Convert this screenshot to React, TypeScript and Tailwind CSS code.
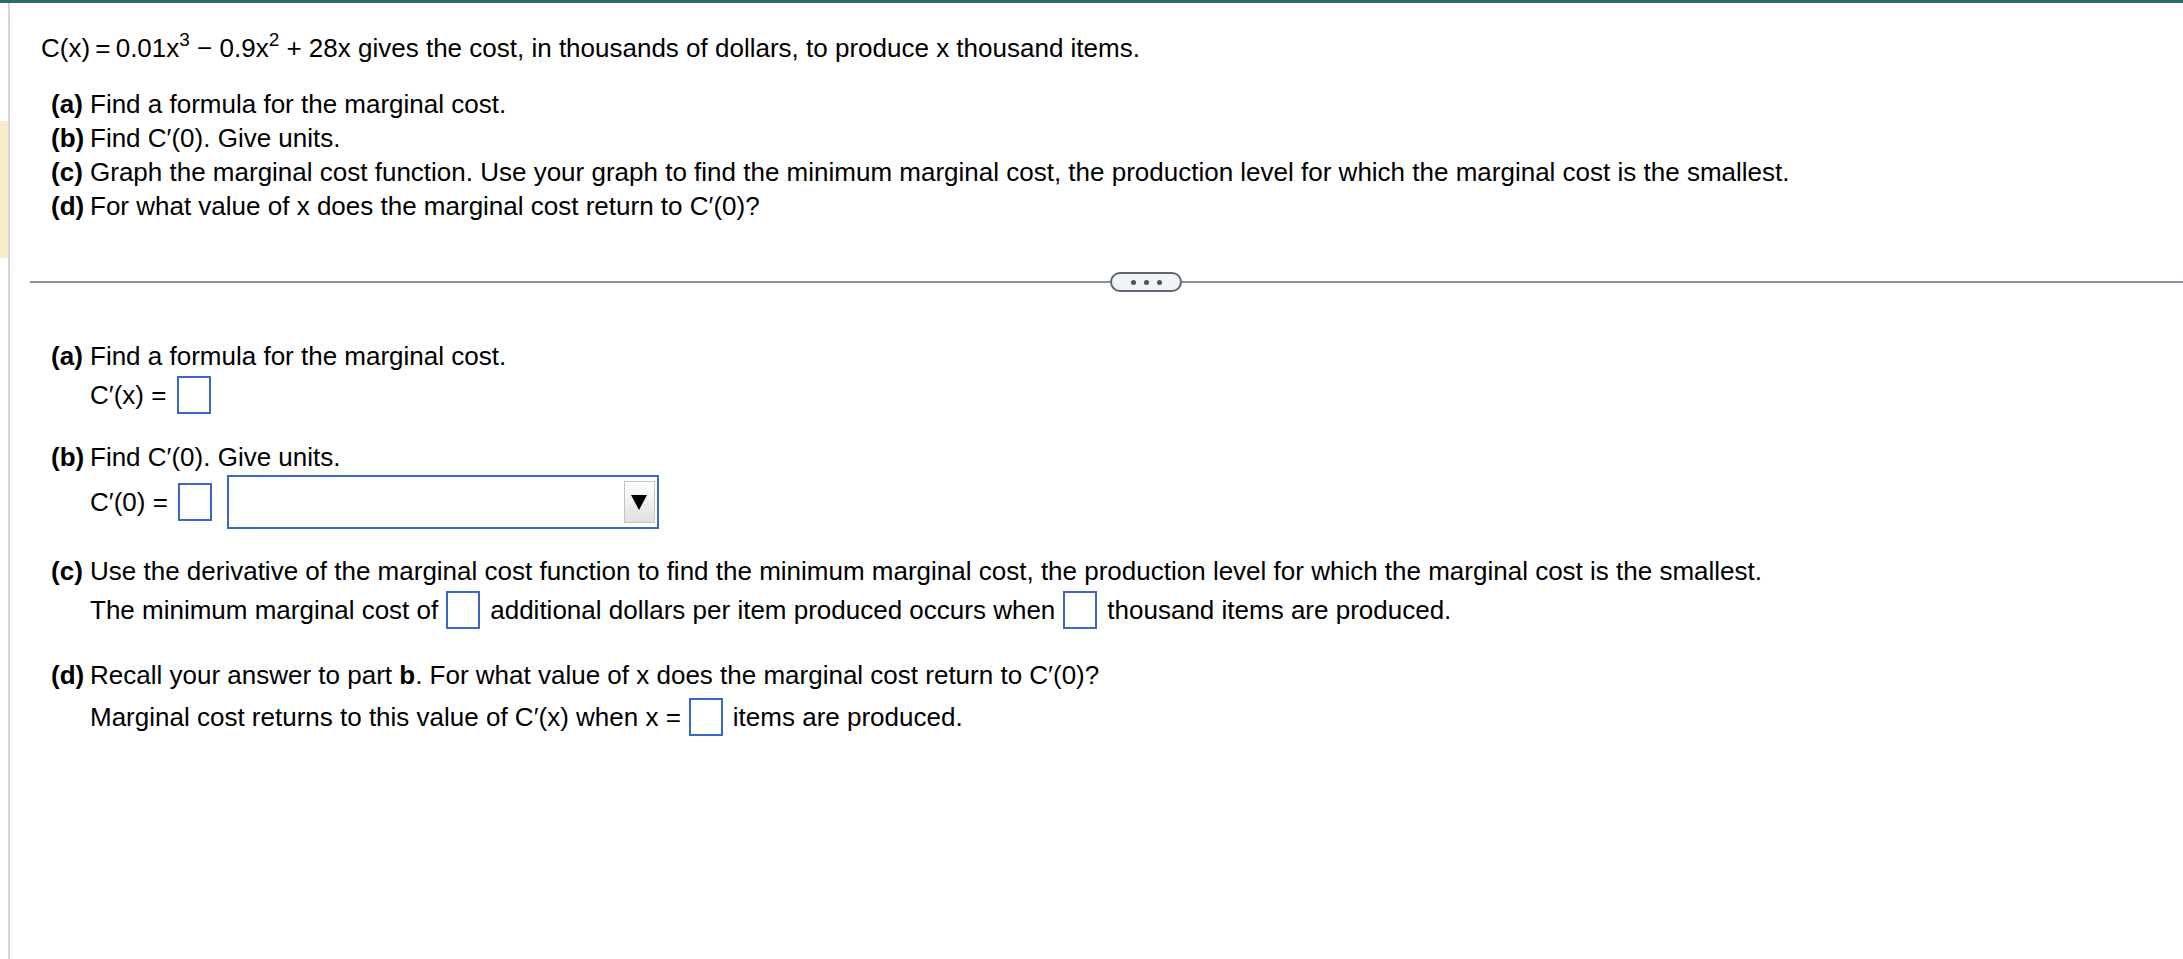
import type { ReactNode } from "react";

const Box = () => (
  <span className="inline-block w-[34px] h-[38px] border-2 border-[#3b67c6] bg-white shrink-0" />
);

const Label = ({ tag, children }: { tag: string; children: ReactNode }) => (
  <div className="flex">
    <span className="w-[39px] shrink-0 font-bold">({tag})</span>
    <span>{children}</span>
  </div>
);

const Sup = ({ n }: { n: string }) => (
  <sup className="text-[19px] relative -top-[11px]">{n}</sup>
);

export default function App() {
  return (
    <div
      className="min-h-screen bg-white border-t-[3px] border-[#2f6670] flex text-[26px] text-black"
      style={{ fontFamily: '"Liberation Sans", Arial, Helvetica, sans-serif' }}
    >
      {/* left gutter */}
      <div className="w-[8px] shrink-0 flex flex-col">
        <div className="mt-[118px] h-[137px] bg-[#f8edcb]" />
      </div>
      <div className="w-[2px] shrink-0 bg-[#d0d4de]" />

      <div className="flex-1 min-w-0">
        {/* question prompt */}
        <div className="pl-[31px] pt-[29px]">
          <p className="leading-[33px]">
            C(x)&thinsp;=&thinsp;0.01x<Sup n="3" /> − 0.9x<Sup n="2" /> + 28x gives the cost, in thousands of dollars, to
            produce x thousand items.
          </p>
          <div className="mt-[22px] pl-[10px] leading-[34px]">
            <Label tag="a">Find a formula for the marginal cost.</Label>
            <Label tag="b">Find C′(0). Give units.</Label>
            <Label tag="c">
              Graph the marginal cost function. Use your graph to find the minimum marginal cost, the production
              level for which the marginal cost is the smallest.
            </Label>
            <Label tag="d">For what value of x does the marginal cost return to C′(0)?</Label>
          </div>
        </div>

        {/* divider */}
        <div className="mt-[49px] ml-[20px] flex items-center h-[20px]">
          <div className="w-[1080px] h-[2px] bg-[#8a92a2]" />
          <div className="w-[72px] h-[20px] shrink-0 rounded-full border-2 border-[#5c6675] bg-[#f2f3f5] flex items-center justify-center gap-[8px]">
            <span className="w-[5px] h-[5px] rounded-full bg-[#4a5260]" />
            <span className="w-[5px] h-[5px] rounded-full bg-[#4a5260]" />
            <span className="w-[5px] h-[5px] rounded-full bg-[#4a5260]" />
          </div>
          <div className="flex-1 h-[2px] bg-[#8a92a2]" />
        </div>

        {/* answers */}
        <div className="pl-[41px] mt-[48px] leading-[33px]">
          <Label tag="a">Find a formula for the marginal cost.</Label>
          <div className="mt-[2px] pl-[39px] h-[40px] flex items-center">
            <span className="mr-[11px]">C′(x) =</span>
            <Box />
          </div>

          <div className="mt-[26px]">
            <Label tag="b">Find C′(0). Give units.</Label>
          </div>
          <div className="mt-[1px] pl-[39px] h-[54px] flex items-center">
            <span className="mr-[10px]">C′(0) =</span>
            <Box />
            <div className="ml-[15px] w-[432px] h-[54px] border-2 border-[#3b67c6] bg-white flex items-center justify-end pr-[2px]">
              <div className="w-[31px] h-[42px] border border-[#c4c4c4] bg-gradient-to-b from-white to-[#e0e0e0] flex items-center justify-center">
                <svg width="18" height="17" viewBox="0 0 18 17">
                  <polygon points="1,1 17,1 9,16" fill="#000" />
                </svg>
              </div>
            </div>
          </div>

          <div className="mt-[26px]">
            <Label tag="c">
              Use the derivative of the marginal cost function to find the minimum marginal cost, the production
              level for which the marginal cost is the smallest.
            </Label>
          </div>
          <div className="mt-[2px] pl-[39px] h-[40px] flex items-center">
            <span className="mr-[8px]">The minimum marginal cost of</span>
            <Box />
            <span className="ml-[10px] mr-[8px]">additional dollars per item produced occurs when</span>
            <Box />
            <span className="ml-[10px]">thousand items are produced.</span>
          </div>

          <div className="mt-[29px]">
            <Label tag="d">
              Recall your answer to part <b>b</b>. For what value of x does the marginal cost return to C′(0)?
            </Label>
          </div>
          <div className="mt-[5px] pl-[39px] h-[40px] flex items-center">
            <span className="mr-[8px]">Marginal cost returns to this value of C′(x) when x =</span>
            <Box />
            <span className="ml-[10px]">items are produced.</span>
          </div>
        </div>
      </div>
    </div>
  );
}
